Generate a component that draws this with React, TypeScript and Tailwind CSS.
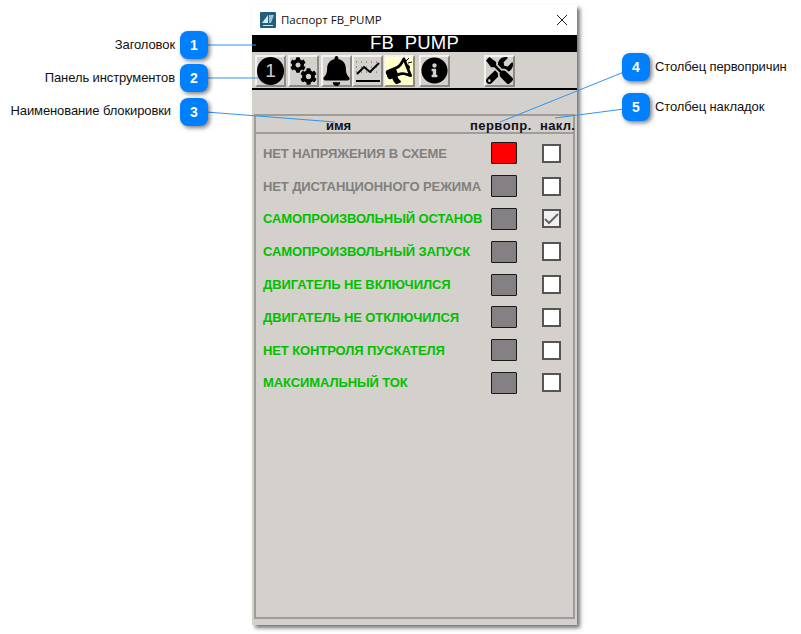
import { FaBell, FaBullhorn, FaCog, FaInfoCircle, FaTools } from 'react-icons/fa';
import type { ReactNode } from 'react';

const rows = [
    { name: 'НЕТ НАПРЯЖЕНИЯ В СХЕМЕ', green: false, red: true, checked: false },
    { name: 'НЕТ ДИСТАНЦИОННОГО РЕЖИМА', green: false, red: false, checked: false },
    { name: 'САМОПРОИЗВОЛЬНЫЙ ОСТАНОВ', green: true, red: false, checked: true },
    { name: 'САМОПРОИЗВОЛЬНЫЙ ЗАПУСК', green: true, red: false, checked: false },
    { name: 'ДВИГАТЕЛЬ НЕ ВКЛЮЧИЛСЯ', green: true, red: false, checked: false },
    { name: 'ДВИГАТЕЛЬ НЕ ОТКЛЮЧИЛСЯ', green: true, red: false, checked: false },
    { name: 'НЕТ КОНТРОЛЯ ПУСКАТЕЛЯ', green: true, red: false, checked: false },
    { name: 'МАКСИМАЛЬНЫЙ ТОК', green: true, red: false, checked: false },
];

const callouts = [
    { n: 1, label: 'Заголовок', cls: 'left-[180px] top-[31px]', labelCls: 'right-[626px] top-[37px]' },
    { n: 2, label: 'Панель инструментов', cls: 'left-[180px] top-[64px]', labelCls: 'right-[626px] top-[70px]' },
    { n: 3, label: 'Наименование блокировки', cls: 'left-[180px] top-[98px]', labelCls: 'right-[630px] top-[103px]' },
    { n: 4, label: 'Столбец первопричин', cls: 'left-[622px] top-[53px]', labelCls: 'left-[655px] top-[59px]' },
    { n: 5, label: 'Столбец накладок', cls: 'left-[622px] top-[93px]', labelCls: 'left-[655px] top-[99px]' },
];

const ToolButton = ({ children, active }: { children: ReactNode; active?: boolean }) => (
    <div
        className={`flex h-[32px] w-[31px] items-center justify-center border-2 border-t-[#f4f2ee] border-l-[#f4f2ee] border-r-[#8d8a85] border-b-[#8d8a85] text-black ${
            active ? 'bg-[#ffffc8]' : 'bg-[#d4d0cb]'
        }`}
    >
        {children}
    </div>
);

const App = () => {
    return (
        <div className="relative h-[634px] w-[801px] overflow-hidden bg-white font-['Liberation_Sans',Arial,sans-serif]">
            <div className="absolute left-[252px] top-[5px] flex h-[620px] w-[325px] flex-col bg-[#d4d0cb] shadow-[3px_3px_4px_rgba(0,0,0,0.55)]">
                <div className="flex h-[30px] items-center bg-white pl-[8px] pr-[9px]">
                    <svg width="16" height="16" viewBox="0 0 16 16">
                        <rect width="16" height="16" rx="1" fill="#1f5f7c" />
                        <path d="M2 11 L8 3 L8 11 Z" fill="#d9e8ee" />
                        <path d="M9 3 L14 3 L11 11 L9 11 Z" fill="#9cc3d3" />
                        <rect x="3" y="13" width="10" height="1" fill="#cfe0e8" />
                    </svg>
                    <span className="ml-[5px] font-['Open_Sans',sans-serif] text-[11.5px] leading-none text-[#111]">Паспорт FB_PUMP</span>
                    <svg className="ml-auto" width="12" height="12" viewBox="0 0 12 12">
                        <path d="M1 1 L11 11 M11 1 L1 11" stroke="#222" strokeWidth="1" />
                    </svg>
                </div>
                <div className="flex h-[17px] items-center justify-center bg-black text-[18.5px] leading-none tracking-[0.2px] whitespace-pre text-white">FB  PUMP</div>
                <div className="flex h-[36px] items-center pl-[3px] pt-[1px]">
                    <ToolButton>
                        <span className="flex h-[28px] w-[28px] items-center justify-center rounded-full bg-black text-[19px] leading-none text-[#cfcfcf]">1</span>
                    </ToolButton>
                    <div className="ml-[2px]">
                        <ToolButton>
                            <span className="relative block h-[28px] w-[28px]">
                                <FaCog className="absolute left-[0px] top-[0px] text-[16px]" />
                                <FaCog className="absolute bottom-[0px] right-[0px] text-[17px]" />
                            </span>
                        </ToolButton>
                    </div>
                    <div className="ml-[2px]">
                        <ToolButton>
                            <FaBell className="text-[30px]" />
                        </ToolButton>
                    </div>
                    <ToolButton>
                        <svg width="26" height="26" viewBox="0 0 26 26" fill="none" stroke="black">
                            <path d="M1 4 H25 M1 9 H25 M1 14 H25" strokeWidth="1" strokeDasharray="1 4" stroke="#555" />
                            <path d="M2 16 L9 9 L15 14 L24 5" strokeWidth="2" />
                            <path d="M1 23 H25" strokeWidth="2" />
                        </svg>
                    </ToolButton>
                    <div className="ml-[1px]">
                        <ToolButton active>
                            <span className="relative block h-[28px] w-[28px]">
                                <FaBullhorn className="absolute left-[0px] top-[2px] -rotate-[22deg] text-[25px]" />
                                <svg className="absolute right-0 top-0" width="9" height="10" viewBox="0 0 9 10">
                                    <path d="M2 4 L5 1 M4 6 L8 5" stroke="black" strokeWidth="1" />
                                </svg>
                            </span>
                        </ToolButton>
                    </div>
                    <div className="ml-[4px]">
                        <ToolButton>
                            <FaInfoCircle className="text-[27px]" />
                        </ToolButton>
                    </div>
                    <div className="ml-[34px]">
                        <ToolButton>
                            <FaTools className="text-[27px]" />
                        </ToolButton>
                    </div>
                </div>
                <div className="h-[2px] bg-black" />
                <div className="flex flex-1 flex-col px-[2px] pb-[6px] pt-[24px]">
                    <div className="flex flex-1 flex-col border-2 border-[#a09d98]">
                        <div className="relative h-[18px] border-b-2 border-[#a09d98] text-[13px] font-bold leading-[20px] text-[#10101c]">
                            <span className="absolute left-[70px] top-0">имя</span>
                            <span className="absolute left-[214px] top-0 tracking-[0.45px]">первопр.</span>
                            <span className="absolute left-[284px] top-0 tracking-[0.3px]">накл.</span>
                        </div>
                        <div className="flex flex-col pt-[3px]">
                            {rows.map((row) => (
                                <div key={row.name} className="flex h-[32.8px] items-center pl-[7px]">
                                    <span className={`w-[228px] whitespace-nowrap text-[13px] font-bold leading-none tracking-[-0.1px] ${row.green ? 'text-[#00c000]' : 'text-[#808080]'}`}>{row.name}</span>
                                    <span className={`h-[22px] w-[26px] rounded-[1px] border border-[#1a1a1a] ${row.red ? 'bg-[#ff0000]' : 'bg-[#848084]'}`} />
                                    <span className={`ml-[25px] flex h-[19px] w-[19px] items-center justify-center border-2 border-[#555] ${row.checked ? 'bg-[#f0f0f0]' : 'bg-white'}`}>
                                        {row.checked && (
                                            <svg width="15" height="13" viewBox="0 0 15 13">
                                                <path d="M1 7 L5 11 L14 2" fill="none" stroke="#666" strokeWidth="2" />
                                            </svg>
                                        )}
                                    </span>
                                </div>
                            ))}
                        </div>
                    </div>
                </div>
            </div>

            <svg className="pointer-events-none absolute left-0 top-0" width="801" height="634">
                <path d="M206 45 L256 45 M206 78 L258 78 M206 112 L335 122 M624 72 L500 122 M624 109 L555 118" stroke="#2f93f5" strokeWidth="1" fill="none" />
            </svg>

            {callouts.map((c) => (
                <div key={c.n}>
                    <div className={`absolute flex h-[28px] w-[28px] items-center justify-center rounded-[8px] bg-[#0080ff] text-[14px] font-bold leading-none text-white shadow-[2px_2px_4px_rgba(0,0,0,0.5)] ${c.cls}`}>{c.n}</div>
                    <span className={`absolute whitespace-nowrap text-[13px] leading-[16px] tracking-[-0.1px] text-[#111] ${c.labelCls}`}>{c.label}</span>
                </div>
            ))}
        </div>
    );
};

export default App;
